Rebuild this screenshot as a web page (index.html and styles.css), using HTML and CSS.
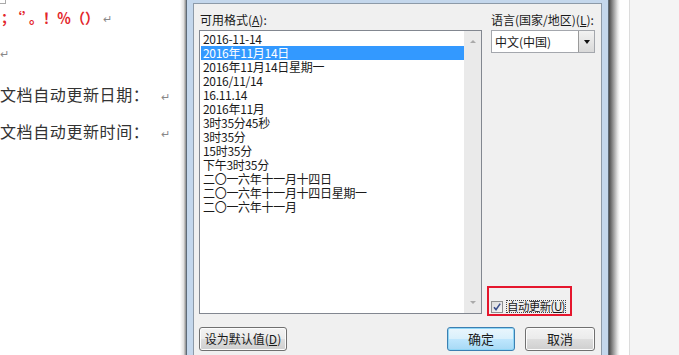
FILE: index.html
```html
<!DOCTYPE html>
<html lang="zh">
<head>
<meta charset="utf-8">
<link rel="stylesheet" href="styles.css">
</head>
<body>
<div class="screen">
  <div class="doc">
    <span class="corner"></span>
    <p class="red">；‘’。！％（）<span class="ret">↵</span></p>
    <p class="empty"><span class="ret">↵</span></p>
    <p class="line">文档自动更新日期：<span class="ret">↵</span></p>
    <p class="line">文档自动更新时间：<span class="ret">↵</span></p>
  </div>
  <div class="shadow-l"></div>
  <div class="dialog">
    <div class="body">
      <div class="grid">
        <div class="col">
          <div class="label">可用格式(<u>A</u>):</div>
          <div class="listbox">
            <ul class="items">
              <li>2016-11-14</li>
              <li class="sel">2016年11月14日</li>
              <li>2016年11月14日星期一</li>
              <li>2016/11/14</li>
              <li>16.11.14</li>
              <li>2016年11月</li>
              <li>3时35分45秒</li>
              <li>3时35分</li>
              <li>15时35分</li>
              <li>下午3时35分</li>
              <li>二〇一六年十一月十四日</li>
              <li>二〇一六年十一月十四日星期一</li>
              <li>二〇一六年十一月</li>
            </ul>
            <div class="scroll"><span class="arrow up"></span><span class="arrow down"></span></div>
          </div>
        </div>
        <div class="col right">
          <div class="label">语言(国家/地区)(<u>L</u>):</div>
          <div class="combo"><span class="combo-text">中文(中国)</span><span class="drop"><span class="tri"></span></span></div>
          <div class="auto">
            <span class="check"><svg width="10" height="10" viewBox="0 0 10 10"><path d="M2 5.2 L4 7.6 L8.2 1.6" fill="none" stroke="#3a4f8c" stroke-width="1.6"/></svg></span>
            <span class="focus">自动更新(<u>U</u>)</span>
            <span class="annot"></span>
          </div>
        </div>
      </div>
      <div class="buttons">
        <button class="btn wide">设为默认值(<u>D</u>)</button>
        <span class="spacer"></span>
        <button class="btn default">确定</button>
        <button class="btn">取消</button>
      </div>
    </div>
  </div>
  <div class="shadow-r"></div>
  <div class="gap"></div>
  <div class="far"></div>
</div>
</body>
</html>
```

FILE: styles.css
```css
* { box-sizing: border-box; }
html, body { margin: 0; padding: 0; }
body { width: 679px; height: 355px; overflow: hidden; background: #fff; font-family: "Noto Sans CJK SC", "Noto Sans", sans-serif; }
.screen { display: flex; height: 355px; }

.doc { width: 180px; flex: none; position: relative; background: #fff; color: #222; }
.doc p { margin: 0; white-space: nowrap; }
.corner { position: absolute; left: 0; top: 0; width: 6px; height: 4px; border-right: 1px solid #aaa; border-bottom: 1px solid #aaa; }
.red { color: #e3262b; font-size: 14px; font-weight: bold; line-height: 20px; padding-top: 7px; padding-left: 1px; }
.ret { color: #888; font-size: 11px; font-weight: normal; margin-left: 4px; }
.empty { line-height: 16px; margin-top: 15px !important; }
.empty .ret { margin-left: 0; }
.line { font-size: 16px; letter-spacing: 0.6px; line-height: 20px; color: #333; }
.line .ret { margin-left: 12px; }
.empty + .line { margin-top: 23px; }
.line + .line { margin-top: 15px; }

.shadow-l { width: 6px; flex: none; background: linear-gradient(to right, #fff, #e2e2e2 60%, #8a8a8a); }

.dialog { width: 423px; flex: none; border-left: 1px solid #5e6b78; border-right: 1px solid #5e6b78; background: #c4d7ec; padding: 3px 6px 0; display: flex; }
.body { flex: 1; background: #f0f0f0; border: 1px solid #8d9aa8; border-bottom: none; padding: 9px 6px 0 5px; font-size: 12px; color: #1a1a1a; }
.grid { display: grid; grid-template-columns: 283px 104px; column-gap: 9px; }
.col { display: flex; flex-direction: column; }
.label { line-height: 14px; height: 14px; padding-left: 1px; }
.listbox { margin-top: 3px; height: 284px; border: 1px solid #828790; background: #fff; display: flex; }
.items { list-style: none; margin: 1px 0 0 1px; padding: 0; flex: 1; }
.items li { height: 14px; line-height: 14px; padding-left: 2px; white-space: nowrap; letter-spacing: -0.3px; }
.items li.sel { background: #3399ff; color: #fff; }
.scroll { width: 17px; flex: none; background: #eaeaea; position: relative; display: flex; flex-direction: column; justify-content: space-between; align-items: center; padding: 9px 0 9px; }
.arrow { width: 0; height: 0; border-left: 3px solid transparent; border-right: 3px solid transparent; }
.arrow.up { border-bottom: 3px solid #aaa; }
.arrow.down { border-top: 3px solid #aaa; }

.right .label { padding-left: 0; }
.combo { margin-top: 3px; height: 23px; border: 1px solid #a4a7ad; background: #fff; display: flex; align-items: center; }
.combo-text { flex: 1; padding-left: 3px; }
.drop { width: 16px; height: 21px; border-left: 1px solid #9a9a9a; background: linear-gradient(#f2f2f2, #d9d9d9); display: flex; align-items: center; justify-content: center; }
.tri { width: 0; height: 0; border-left: 3.5px solid transparent; border-right: 3.5px solid transparent; border-top: 4px solid #111; }

.auto { margin-top: auto; margin-bottom: 1px; height: 13px; display: flex; align-items: center; position: relative; }
.check { width: 12px; height: 12px; border: 1px solid #8e8f8f; background: linear-gradient(135deg, #dcdcdc, #f6f6f6); display: flex; align-items: center; justify-content: center; }
.focus { margin-left: 3px; border: 1px dotted #444; line-height: 11px; height: 13px; padding: 0; font-size: 11.5px; letter-spacing: -0.6px; white-space: nowrap; }
.annot { position: absolute; left: -4px; top: -14px; width: 85px; height: 30px; border: 2px solid #e5162d; }

.buttons { display: flex; margin-top: 13px; gap: 10px; }
.spacer { flex: 1; }
.btn { height: 24px; width: 70px; border: 1px solid #707070; border-radius: 3px; background: linear-gradient(#f3f3f3 0%, #ebebeb 48%, #dddddd 52%, #cfcfcf 100%); font-family: inherit; font-size: 13px; color: #1a1a1a; padding: 0; line-height: 20px; box-shadow: inset 0 0 0 1px #fcfcfc; }
.btn.wide { width: 88px; font-size: 12px; }
.btn.default { width: 68px; border-color: #3c7fb1; box-shadow: inset 0 0 0 1px #8fd6f6; background: linear-gradient(#eaf6fd 0%, #d9f0fc 48%, #bee6fd 52%, #a7d9f5 100%); }

.shadow-r { width: 11px; flex: none; background: linear-gradient(to right, #4a4a4a, #9a9a9a 40%, #e8e8e8 80%, #fff); }
.gap { width: 10px; flex: none; background: #fff; border-right: 1px solid #dcdcdc; }
.far { flex: 1; background: #f4f4f4; }
```
